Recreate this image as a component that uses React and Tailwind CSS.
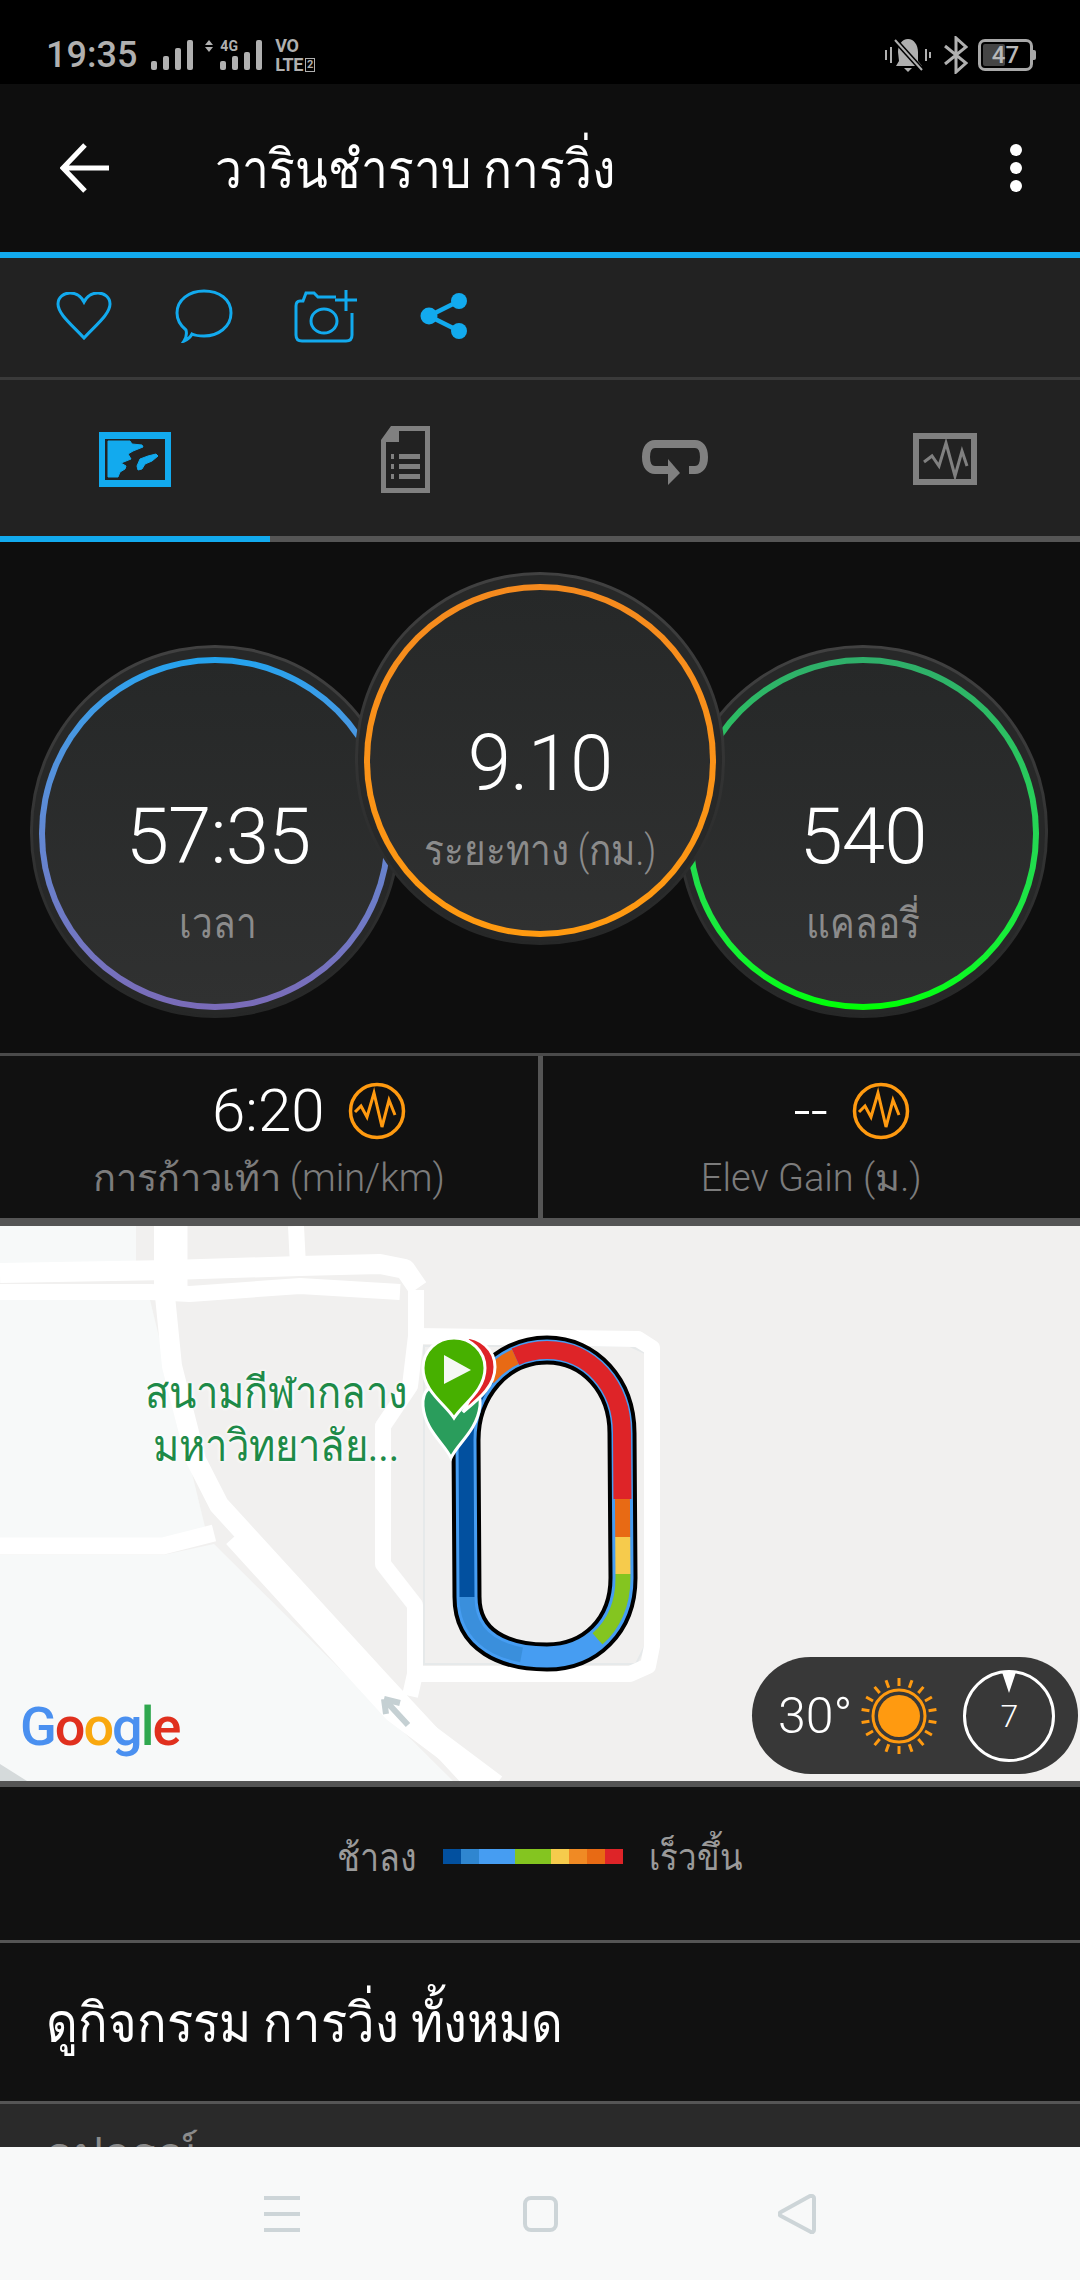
import React from "react";

// track centre line, the coloured parts are cut out of it with dash offsets
const trackPath =
  "M467 371L466 214C466 165 500 124 547 124C590 124 622 160 622 207L623 352C623 400 590 431 547 431C505 431 467 415 467 371Z";

const trackParts = [
  { color: "#02509f", from: 0, to: 218, width: 15 },
  { color: "#e86a14", from: 218, to: 252, width: 16 },
  { color: "#de2428", from: 252, to: 469, width: 18 },
  { color: "#e86a14", from: 469, to: 506, width: 15 },
  { color: "#f6cb4c", from: 506, to: 542, width: 15 },
  { color: "#84c520", from: 542, to: 612, width: 15 },
  { color: "#3a8fdc", from: 690, to: 775, width: 15 },
];

// one big ring stat, ring colours come from the gradient classes passed in
const StatCircle = ({ value, label, ringClass, className, innerClass = "" }) => (
  <div
    className={`shrink-0 w-[370px] h-[373px] rounded-full bg-linear-to-b from-[#414141] to-[#262727] p-[3px] ${className}`}
  >
    <div className="w-full h-full rounded-full bg-[#272828] pt-[9px] pb-[5px] px-[6px]">
      <div className={`w-full h-full rounded-full p-[6px] bg-linear-to-b ${ringClass}`}>
        <div className={`w-full h-full rounded-full bg-linear-to-b from-[#262828] to-[#303131] flex flex-col items-center pt-[128px] ${innerClass}`}>
          <div className="text-white font-light text-[78px] leading-[92px] tracking-[-1px]">{value}</div>
          <div className="text-[#8b8b8b] font-light text-[37px] leading-[52px] mt-[15px] whitespace-nowrap scale-y-[1.14]">{label}</div>
        </div>
      </div>
    </div>
  </div>
);

const PulseCircle = () => (
  <svg width="58" height="58" viewBox="0 0 58 58" fill="none" className="shrink-0">
    <circle cx="29" cy="29" r="26.5" stroke="#ff9a10" strokeWidth="3.5" />
    <polyline points="7,30 13,24 19,35 26,11 34,45 41,18 47,33" stroke="#ff9a10" strokeWidth="3" />
  </svg>
);

const BottomStat = ({ value, label }) => (
  <div className="flex-1 flex flex-col items-center pt-[22px]">
    <div className="flex items-center gap-[24px] h-[66px] ml-[81px]">
      <span className="text-white font-light text-[60px] leading-none">{value}</span>
      <PulseCircle />
    </div>
    <div className="text-[#7c7c7c] font-light text-[38px] leading-[50px] mt-[9px] whitespace-nowrap">{label}</div>
  </div>
);

const sunRays = Array.from({ length: 18 }, (_, i) => i * 20);

const legend = [
  { color: "bg-[#02509f]", w: "w-[18px]" },
  { color: "bg-[#2f86d0]", w: "w-[18px]" },
  { color: "bg-[#469df2]", w: "w-[36px]" },
  { color: "bg-[#84c520]", w: "w-[36px]" },
  { color: "bg-[#f6cb4c]", w: "w-[18px]" },
  { color: "bg-[#f08a24]", w: "w-[18px]" },
  { color: "bg-[#e86a14]", w: "w-[18px]" },
  { color: "bg-[#de2428]", w: "w-[18px]" },
];

const MapDrawing = () => (
  <svg width="1080" height="555" viewBox="0 0 1080 555" className="block" fill="none">
    <rect width="1080" height="555" fill="#f1f0ef" />
    {/* park blocks */}
    <path d="M0 0H136V37H0Z" fill="#f7f9f9" />
    <path d="M0 74H150L205 301L163 312H0Z" fill="#f7f9f9" />
    <path d="M0 329H163L214 318L453 555H0Z" fill="#f7f9f9" />
    <path d="M0 538L27 555H0Z" fill="#d5dadb" />
    {/* stadium plot */}
    <path d="M424 120H630L645 127V420L636 438H424Z" stroke="#e6e9ea" strokeWidth="2" />
    {/* roads */}
    <g stroke="#ffffff" strokeLinejoin="round">
      <path d="M0 47L170 44L300 40L380 38L405 43L418 62" strokeWidth="20" />
      <path d="M0 66H150L190 68L300 60L400 66" strokeWidth="16" />
      <path d="M164 0V60L172 140L196 234L219 279L380 455L473 555" strokeWidth="20" />
      <path d="M180 0V60" strokeWidth="15" />
      <path d="M296 0L298 40" strokeWidth="16" />
      <path d="M0 320H163L214 307" strokeWidth="17" />
      <path d="M235 310L395 485L495 560" strokeWidth="24" />
      <path d="M416 64V110L410 160L383 200V338L415 379V453" strokeWidth="16" />
      <path d="M416 110L638 113L652 122V420L648 440L630 448H415L410 470" strokeWidth="16" />
    </g>
    <path d="M384 473L408 499M384 473L386 488M384 473L400 477" stroke="#c5d0d3" strokeWidth="6" />
    {/* track */}
    <path d={trackPath} stroke="#000000" strokeWidth="29" />
    <path d={trackPath} stroke="#469df2" strokeWidth="21" />
    {trackParts.map((part) => (
      <path
        key={part.from}
        d={trackPath}
        pathLength="775"
        stroke={part.color}
        strokeWidth={part.width}
        strokeDasharray={`${part.to - part.from} 775`}
        strokeDashoffset={-part.from}
      />
    ))}
    {/* pins */}
    <path d="M451 232C445 218 425 205 423 180C422 165 430 155 450 160C470 155 482 165 480 180C477 205 457 218 451 232Z" fill="#2a9d5c" stroke="#ffffff" strokeWidth="3" />
    <path d="M463 186C480 172 495 160 495 141C495 124 480 110 462 111C480 118 484 150 463 186Z" fill="#de2428" stroke="#ffffff" strokeWidth="3" />
    <path d="M454 192C445 178 423 165 423 142C423 125 437 112 454 112C471 112 485 125 485 142C485 165 463 178 454 192Z" fill="#47b000" stroke="#ffffff" strokeWidth="3" />
    <path d="M444 129L471 144L444 158Z" fill="#f4f8f4" />
  </svg>
);

const App = () => {
  return (
    <div className="w-[1080px] h-[2280px] overflow-hidden flex flex-col bg-[#111111] font-[Roboto,'Noto_Sans',sans-serif]">
      {/* Status bar */}
      <div className="h-[84px] shrink-0 bg-black flex items-center justify-between pl-[46px] pr-[44px] pt-[26px] text-[#b0b0b0]">
        <div className="flex items-center">
          <span className="text-[36px] font-medium leading-none">19:35</span>
          <svg width="44" height="30" viewBox="0 0 44 30" className="ml-[14px]" fill="#b0b0b0">
            <rect x="0" y="21" width="6" height="9" rx="2" />
            <rect x="12" y="16" width="6" height="14" rx="2" />
            <rect x="24" y="8" width="6" height="22" rx="2" />
            <rect x="36" y="0" width="6" height="30" rx="2" />
          </svg>
          <div className="relative w-[60px] h-[30px] ml-[10px]">
            <svg width="60" height="30" viewBox="0 0 60 30" fill="#b0b0b0">
              <path d="M4 0L8 5H0ZM4 12L8 7H0Z" />
              <rect x="15" y="21" width="6" height="9" rx="2" />
              <rect x="27" y="16" width="6" height="14" rx="2" />
              <rect x="39" y="12" width="6" height="18" rx="2" />
              <rect x="51" y="0" width="6" height="30" rx="2" />
            </svg>
            <span className="absolute left-[15px] top-[-1px] text-[14px] font-bold leading-none">4G</span>
          </div>
          <div className="ml-[10px] flex flex-col text-[18px] font-bold leading-[19px] w-[42px] tracking-[-0.5px]">
            <span>VO</span>
            <span className="flex items-center">LTE<span className="ml-[2px] border border-[#b0b0b0] text-[11px] leading-[12px] px-[1px]">2</span></span>
          </div>
        </div>
        <div className="flex items-center">
          <svg width="46" height="36" viewBox="0 0 46 36" fill="none">
            <path d="M23 2C29 2 33 8 33 15V24L37 29H11L14 24L13 15C13 8 17 2 23 2ZM19 31H27L23 35Z" fill="#b0b0b0" />
            <path d="M9 2L38 34" stroke="#000000" strokeWidth="5" />
            <path d="M10 3L37 33" stroke="#b0b0b0" strokeWidth="2" />
            <path d="M1 13V23M6 10V26M41 12V24M45 15V21" stroke="#b0b0b0" strokeWidth="2" />
          </svg>
          <svg width="24" height="38" viewBox="0 0 24 38" fill="none" className="ml-[13px]">
            <path d="M1 10L22 27L12 36V2L22 11L1 28" stroke="#b0b0b0" strokeWidth="3" />
          </svg>
          <div className="ml-[10px] flex items-center">
            <div className="relative w-[55px] h-[32px] rounded-[7px] border-[3px] border-[#a8a8a8] flex items-center justify-center overflow-hidden">
              <div className="absolute left-[2px] top-[2px] bottom-[2px] w-[22px] bg-[#444444] rounded-[2px]" />
              <span className="relative text-[24px] font-medium leading-none text-[#b8b8b8]">47</span>
            </div>
            <div className="w-[3px] h-[10px] bg-[#a8a8a8] rounded-r-[2px]" />
          </div>
        </div>
      </div>

      {/* Header */}
      <div className="h-[168px] shrink-0 bg-[#0e0e0e] flex items-center pl-[60px] pr-[58px]">
        <svg width="50" height="50" viewBox="0 0 50 50" fill="none">
          <path d="M49 25H4M25 2L3 25L25 48" stroke="#ffffff" strokeWidth="5" />
        </svg>
        <div className="ml-[105px] flex-1 text-white text-[48px] leading-none pt-[3px] scale-y-[1.12]">วารินชำราบ การวิ่ง</div>
        <div className="flex flex-col gap-[6px]">
          <div className="w-[12px] h-[12px] rounded-full bg-white" />
          <div className="w-[12px] h-[12px] rounded-full bg-white" />
          <div className="w-[12px] h-[12px] rounded-full bg-white" />
        </div>
      </div>
      <div className="h-[6px] shrink-0 bg-[#12aaee]" />

      {/* Actions */}
      <div className="h-[119px] shrink-0 bg-[#222222] flex items-center pl-[56px] pb-[4px]">
        <svg width="56" height="48" viewBox="0 0 56 48" fill="none">
          <path d="M28 46C16 33 2 22 2 12C2 5 8 1 14 1C20 1 25 4 28 10C31 4 36 1 42 1C48 1 54 5 54 12C54 22 40 33 28 46Z" stroke="#12aaee" strokeWidth="3" />
        </svg>
        <svg width="58" height="54" viewBox="0 0 58 54" fill="none" className="ml-[63px]">
          <path d="M9 52C14 50 16 47 17 45C21 47 25 47 29 47C43 47 56 38 56 24C56 10 44 2 29 2C14 2 2 11 2 24C2 31 6 37 11 41C12 45 11 49 9 52Z" stroke="#12aaee" strokeWidth="3" />
        </svg>
        <svg width="64" height="54" viewBox="0 0 64 54" fill="none" className="ml-[61px]">
          <path d="M42 8H24L20 4H12L9 12H6C3 12 2 14 2 17V46C2 50 4 52 8 52H52C56 52 58 50 58 46V24" stroke="#12aaee" strokeWidth="3" />
          <ellipse cx="30" cy="32" rx="13" ry="12" stroke="#12aaee" strokeWidth="3" />
          <path d="M52 1V22M41 11H63" stroke="#12aaee" strokeWidth="3" />
        </svg>
        <svg width="48" height="48" viewBox="0 0 48 48" className="ml-[62px]" fill="#12aaee">
          <circle cx="39" cy="9" r="8" />
          <circle cx="9" cy="24" r="8.5" />
          <circle cx="39" cy="39" r="8" />
          <path d="M39 9L9 24L39 39" stroke="#12aaee" strokeWidth="4.5" fill="none" />
        </svg>
      </div>
      <div className="h-[3px] shrink-0 bg-[#3a3a3a]" />

      {/* Tabs */}
      <div className="h-[156px] shrink-0 bg-[#222222] flex items-center pt-[2px]">
        <div className="w-[270px] flex justify-center">
          <svg width="72" height="55" viewBox="0 0 72 55" fill="#12aaee">
            <path d="M0 0H72V55H0ZM6 7V48H66V7Z" fillRule="evenodd" />
            <path d="M9 9H31L33 12L43 13L44 15L34 19L29 22L32 27L27 29L22 31L27 34L26 37L21 40L19 45H9Z" strokeLinejoin="round" stroke="#12aaee" strokeWidth="1" />
            <path d="M38 34L41 27L49 24L57 22L59 24L53 29L46 32L43 37L39 38Z" strokeLinejoin="round" stroke="#12aaee" strokeWidth="1" />
          </svg>
        </div>
        <div className="w-[270px] flex justify-center">
          <svg width="49" height="67" viewBox="0 0 49 67" fill="#808080">
            <path d="M10 0H49V67H0V14ZM18 5V16H5V62H44V5Z" fillRule="evenodd" />
            <path d="M10 28H13V33H10ZM18 28H39V33H18ZM10 38H13V43H10ZM18 38H39V43H18ZM10 48H13V53H10ZM18 48H39V53H18Z" />
          </svg>
        </div>
        <div className="w-[270px] flex justify-center pt-[5px]">
          <svg width="68" height="46" viewBox="0 0 68 46" fill="none">
            <path d="M48 31H54C59 31 63 27 63 18C63 9 59 5 54 5H14C9 5 5 9 5 18C5 27 9 31 14 31H30" stroke="#808080" strokeWidth="8" />
            <path d="M27 20L39 34L27 46Z" fill="#808080" />
          </svg>
        </div>
        <div className="w-[270px] flex justify-center">
          <svg width="64" height="52" viewBox="0 0 64 52" fill="none">
            <rect x="3" y="3" width="58" height="46" stroke="#808080" strokeWidth="6" />
            <polyline points="11,29 19,23 26,33 33,10 42,43 49,18 54,33" stroke="#808080" strokeWidth="3" />
          </svg>
        </div>
      </div>
      <div className="h-[6px] shrink-0 bg-[#555555] flex">
        <div className="w-[270px] bg-[#12aaee]" />
      </div>

      {/* Rings */}
      <div className="h-[511px] shrink-0 bg-[#0e0e0e] flex items-start pl-[30px]">
        <StatCircle value="57:35" label="เวลา" ringClass="from-[#22a3ee] to-[#7a6bb8]" className="mt-[103px]" innerClass="pl-[6px]" />
        <StatCircle value="9.10" label="ระยะทาง (กม.)" ringClass="from-[#f58a1e] to-[#ff9a10]" className="mt-[30px] -ml-[45px] relative z-10" />
        <StatCircle value="540" label="แคลอรี่" ringClass="from-[#2fae6a] to-[#00ff00]" className="mt-[103px] -ml-[47px]" />
      </div>

      {/* Pace / elevation */}
      <div className="h-[3px] shrink-0 bg-[#4a4a4a]" />
      <div className="h-[162px] shrink-0 flex bg-[#111111]">
        <BottomStat value="6:20" label="การก้าวเท้า (min/km)" />
        <div className="w-[5px] bg-[#555555]" />
        <BottomStat value="--" label="Elev Gain (ม.)" />
      </div>
      <div className="h-[8px] shrink-0 bg-[#555555]" />

      {/* Map */}
      <div className="h-[555px] shrink-0 relative overflow-hidden">
        <MapDrawing />
        <div className="absolute left-[126px] top-[146px] w-[300px] text-center text-[#1e8a48] text-[40px] leading-[48px] scale-y-[1.1] [text-shadow:0_0_4px_#ffffff,0_0_4px_#ffffff]">
          สนามกีฬากลาง
          <br />
          <span className="whitespace-nowrap">มหาวิทยาลัย...</span>
        </div>
        <div className="absolute left-[20px] top-[474px] text-[54px] leading-none font-medium tracking-[-2px]">
          <span className="text-[#4a90f0]">G</span>
          <span className="text-[#e0301e]">o</span>
          <span className="text-[#f9a80e]">o</span>
          <span className="text-[#4a90f0]">g</span>
          <span className="text-[#2fa84f]">l</span>
          <span className="text-[#e0301e]">e</span>
        </div>
        {/* Weather pill */}
        <div className="absolute left-[752px] top-[431px] w-[326px] h-[117px] rounded-full bg-[#383838] flex items-center pl-[26px]">
          <span className="text-white font-light text-[50px] leading-none">30°</span>
          <svg width="76" height="76" viewBox="-38 -38 76 76" fill="none" className="ml-[9px]">
            <circle r="21" fill="#ff9a10" />
            <circle r="26" stroke="#ff9a10" strokeWidth="3" />
            {sunRays.map((deg) => (
              <line key={deg} x1="0" y1="-30" x2="0" y2="-38" stroke="#ff9a10" strokeWidth="3" transform={`rotate(${deg})`} />
            ))}
          </svg>
          <div className="relative ml-[26px] w-[92px] h-[92px] flex items-center justify-center">
            <svg width="92" height="92" viewBox="0 0 92 92" fill="none" className="absolute inset-0">
              <circle cx="46" cy="46" r="44.5" stroke="#ffffff" strokeWidth="3" />
              <path d="M39 2H53L46 23Z" fill="#ffffff" />
            </svg>
            <span className="text-white font-light text-[32px] leading-none">7</span>
          </div>
        </div>
      </div>
      <div className="h-[6px] shrink-0 bg-[#555555]" />

      {/* Speed legend */}
      <div className="h-[153px] shrink-0 bg-[#111111] flex items-start justify-center pt-[45px] gap-[26px]">
        <span className="text-[#9a9a9a] text-[34px] leading-[52px] font-light scale-y-[1.12]">ช้าลง</span>
        <div className="flex h-[15px] mt-[17px]">
          {legend.map((item, i) => (
            <div key={i} className={`${item.color} ${item.w}`} />
          ))}
        </div>
        <span className="text-[#9a9a9a] text-[33px] leading-[52px] font-light scale-y-[1.12]">เร็วขึ้น</span>
      </div>
      <div className="h-[3px] shrink-0 bg-[#555555]" />

      {/* All activities */}
      <div className="h-[158px] shrink-0 bg-[#111111] flex items-center pl-[46px] pt-[2px] text-white text-[49px] leading-none">
        <span className="scale-y-[1.12]">ดูกิจกรรม การวิ่ง ทั้งหมด</span>
      </div>
      <div className="h-[3px] shrink-0 bg-[#555555]" />

      {/* Next section, cut off by the nav bar */}
      <div className="h-[43px] shrink-0 bg-[#2a2a2a] overflow-hidden pl-[46px] pt-[20px]">
        <div className="text-[#8b8b8b] font-light text-[46px] leading-[60px]">อุปกรณ์</div>
      </div>

      {/* Nav bar */}
      <div className="flex-1 bg-[#f8f9f9] flex items-center pl-[264px]">
        <div className="w-[36px] flex flex-col gap-[12px]">
          <div className="h-[4px] bg-[#cdd5d8]" />
          <div className="h-[4px] bg-[#cdd5d8]" />
          <div className="h-[4px] bg-[#cdd5d8]" />
        </div>
        <div className="w-[35px] h-[36px] ml-[223px] rounded-[8px] border-[4px] border-[#cdd5d8]" />
        <svg width="38" height="40" viewBox="0 0 38 40" fill="none" className="ml-[220px]">
          <path d="M34 2C35 2 36 3 36 4V36C36 38 34 39 33 38L3 22C1 21 1 19 3 18L32 2Z" stroke="#cdd5d8" strokeWidth="4" strokeLinejoin="round" />
        </svg>
      </div>
    </div>
  );
};

export default App;
